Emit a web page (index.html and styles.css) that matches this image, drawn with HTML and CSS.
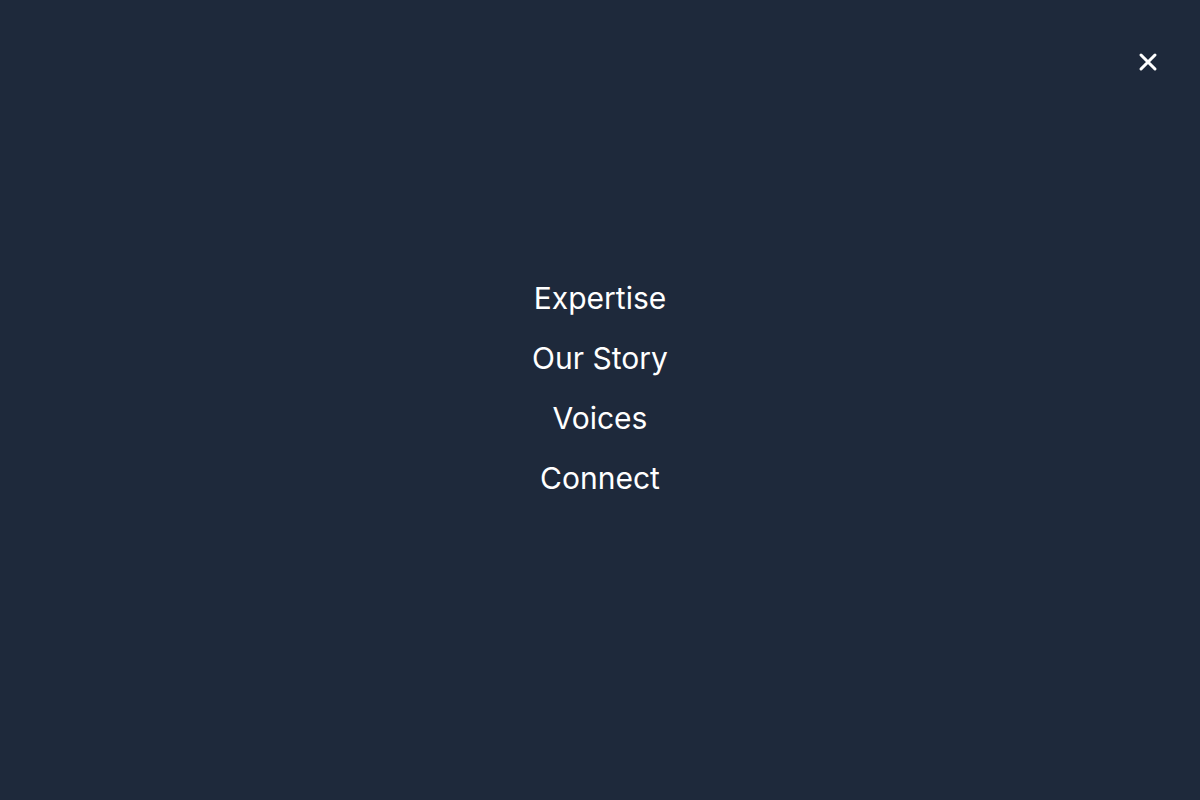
FILE: index.html
```html
<!DOCTYPE html>
<html lang="en">
<head>
<meta charset="utf-8">
<title>Menu</title>
<link rel="stylesheet" href="styles.css">
</head>
<body>
<div class="overlay">
  <header class="top">
    <button class="close" aria-label="Close menu">
      <svg viewBox="0 0 24 24" width="28" height="28" fill="none" stroke="currentColor" stroke-width="2.6" stroke-linecap="round" stroke-linejoin="round"><path d="M18 6 6 18M6 6l12 12"/></svg>
    </button>
  </header>
  <nav class="menu">
    <a href="#">Expertise</a>
    <a href="#">Our Story</a>
    <a href="#">Voices</a>
    <a href="#">Connect</a>
  </nav>
</div>
</body>
</html>
```
FILE: styles.css
```css
html, body {
  margin: 0;
  padding: 0;
  height: 100%;
}
body {
  background: #1e293b;
  font-family: Inter, "Noto Sans", sans-serif;
  color: #ffffff;
}
.overlay {
  height: 100vh;
  display: flex;
  flex-direction: column;
}
.top {
  display: flex;
  justify-content: flex-end;
  padding: 48px 38px 0 0;
}
.close {
  background: none;
  border: 0;
  padding: 0;
  color: #ffffff;
  width: 28px;
  height: 28px;
  display: flex;
  cursor: pointer;
}
.menu {
  display: flex;
  flex-direction: column;
  align-items: center;
  gap: 24px;
  padding-top: 204px;
}
.menu a {
  color: #ffffff;
  text-decoration: none;
  font-size: 30px;
  line-height: 36px;
}
```
